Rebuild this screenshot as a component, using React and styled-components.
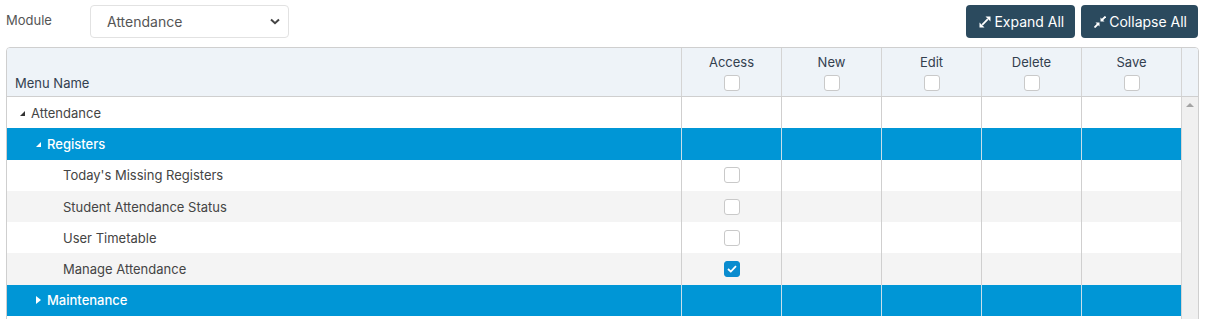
import React from "react";
import styled, { createGlobalStyle } from "styled-components";

const GlobalStyle = createGlobalStyle`
  body {
    margin: 0;
    background: #fff;
    font-family: Inter, "Liberation Sans", sans-serif;
    font-size: 13px;
    color: #444;
  }
`;

const columns = ["Access", "New", "Edit", "Delete", "Save"];

const rows = [
  { label: "Attendance", level: 0, toggle: "open" },
  { label: "Registers", level: 1, toggle: "open", group: true },
  { label: "Today's Missing Registers", level: 2, access: false },
  { label: "Student Attendance Status", level: 2, access: false },
  { label: "User Timetable", level: 2, access: false },
  { label: "Manage Attendance", level: 2, access: true },
  { label: "Maintenance", level: 1, toggle: "closed", group: true },
];

export default function App() {
  return (
    <Page>
      <GlobalStyle />
      <TopBar>
        <ModuleLabel>Module</ModuleLabel>
        <SelectBox>
          <span>Attendance</span>
          <svg width="10" height="7" viewBox="0 0 10 7">
            <path d="M1 1.5 L5 5.2 L9 1.5" fill="none" stroke="#444" strokeWidth="2" />
          </svg>
        </SelectBox>
        <Spacer />
        <ActionButton>
          <svg width="12" height="12" viewBox="0 0 12 12">
            <path d="M3.2 8.8 L8.8 3.2" stroke="#fff" strokeWidth="1.8" />
            <path d="M11.5 0.5 L11.5 5.5 L6.5 0.5 Z" fill="#fff" />
            <path d="M0.5 11.5 L0.5 6.5 L5.5 11.5 Z" fill="#fff" />
          </svg>
          Expand All
        </ActionButton>
        <ActionButton>
          <svg width="12" height="12" viewBox="0 0 12 12">
            <path d="M11.5 0.5 L8 4" stroke="#fff" strokeWidth="1.8" />
            <path d="M0.5 11.5 L4 8" stroke="#fff" strokeWidth="1.8" />
            <path d="M6.5 5.5 L6.5 1.5 L10.5 5.5 Z" fill="#fff" />
            <path d="M5.5 6.5 L5.5 10.5 L1.5 6.5 Z" fill="#fff" />
          </svg>
          Collapse All
        </ActionButton>
      </TopBar>

      <Table>
        <HeaderRow>
          <NameHead>Menu Name</NameHead>
          {columns.map((c) => (
            <PermHead key={c}>
              {c}
              <CheckBox />
            </PermHead>
          ))}
          <ScrollHead />
        </HeaderRow>
        <Body>
          <Rows>
            {rows.map((r, i) => (
              <Row key={r.label} $group={r.group} $striped={!r.group && i % 2 === 1}>
                <NameCell $level={r.level}>
                  {r.toggle === "open" && <OpenToggle $light={r.group} />}
                  {r.toggle === "closed" && <ClosedToggle />}
                  {r.label}
                </NameCell>
                {columns.map((c, j) => (
                  <PermCell key={c} $group={r.group}>
                    {j === 0 && r.access !== undefined && (
                      <CheckBox $checked={r.access}>
                        {r.access && (
                          <svg width="10" height="8" viewBox="0 0 10 8">
                            <path d="M1 4 L3.8 6.6 L9 1.2" fill="none" stroke="#fff" strokeWidth="1.8" />
                          </svg>
                        )}
                      </CheckBox>
                    )}
                  </PermCell>
                ))}
              </Row>
            ))}
          </Rows>
          <ScrollTrack>
            <ScrollArrow />
          </ScrollTrack>
        </Body>
      </Table>
    </Page>
  );
}

const Page = styled.div`
  padding: 5px 0 0 6px;
  width: 1193px;
`;

const TopBar = styled.div`
  display: flex;
  align-items: center;
  gap: 6px;
  height: 33px;
  margin-bottom: 9px;
  padding-right: 1px;
`;

const ModuleLabel = styled.span`
  width: 78px;
  font-size: 13px;
  color: #555;
  align-self: flex-start;
  margin-top: 7px;
`;

const SelectBox = styled.div`
  box-sizing: border-box;
  width: 199px;
  height: 33px;
  border: 1px solid #e2e2e2;
  border-radius: 4px;
  display: flex;
  align-items: center;
  justify-content: space-between;
  padding: 0 8px 0 16px;
  font-size: 14px;
  color: #555;
`;

const Spacer = styled.div`
  flex: 1;
`;

const ActionButton = styled.button`
  box-sizing: border-box;
  height: 33px;
  padding: 0 11px 0 13px;
  border: none;
  border-radius: 4px;
  background: #2b4a5e;
  color: #fff;
  font-family: Inter, "Liberation Sans", sans-serif;
  font-size: 14px;
  display: flex;
  align-items: center;
  gap: 3px;
`;

const Table = styled.div`
  border: 1px solid #cfcfcf;
  border-radius: 4px 4px 0 0;
  overflow: hidden;
`;

const HeaderRow = styled.div`
  display: grid;
  grid-template-columns: 1fr repeat(5, 100px) 17px;
  height: 48px;
  background: #eef3f8;
  border-bottom: 1px solid #cfcfcf;
  color: #33404f;
`;

const NameHead = styled.div`
  display: flex;
  align-items: flex-end;
  padding: 0 0 5px 8px;
  font-size: 13px;
`;

const PermHead = styled.div`
  border-left: 1px solid #d4d4d4;
  display: flex;
  flex-direction: column;
  align-items: center;
  padding-top: 6px;
  gap: 5px;
  font-size: 13px;
`;

const ScrollHead = styled.div`
  border-left: 1px solid #d4d4d4;
`;

const Body = styled.div`
  display: flex;
  height: 222px;
`;

const Rows = styled.div`
  flex: 1;
`;

const Row = styled.div`
  display: grid;
  grid-template-columns: 1fr repeat(5, 100px);
  height: 31.3px;
  background: ${(p) => (p.$group ? "#0096d6" : p.$striped ? "#f4f4f4" : "#fff")};
  color: ${(p) => (p.$group ? "#fff" : "#444")};
  font-weight: ${(p) => (p.$group ? 500 : 400)};
`;

const NameCell = styled.div`
  display: flex;
  align-items: center;
  padding-left: ${(p) => [13, 29, 56][p.$level]}px;
  gap: 6px;
  font-size: 13px;
`;

const OpenToggle = styled.span`
  width: 0;
  height: 0;
  border-left: 5px solid transparent;
  border-bottom: 5px solid ${(p) => (p.$light ? "#fff" : "#333")};
  margin-top: 2px;
`;

const ClosedToggle = styled.span`
  width: 0;
  height: 0;
  border-top: 4px solid transparent;
  border-bottom: 4px solid transparent;
  border-left: 5px solid #fff;
`;

const PermCell = styled.div`
  border-left: 1px solid ${(p) => (p.$group ? "#c8dfea" : "#cfcfcf")};
  display: flex;
  align-items: center;
  justify-content: center;
`;

const CheckBox = styled.span`
  box-sizing: border-box;
  width: 16px;
  height: 16px;
  border-radius: 3px;
  border: 1px solid ${(p) => (p.$checked ? "#0a8ccf" : "#c9c9c9")};
  background: ${(p) => (p.$checked ? "#0a8ccf" : "#fff")};
  display: flex;
  align-items: center;
  justify-content: center;
`;

const ScrollTrack = styled.div`
  width: 17px;
  background: #f0f0f0;
  border-left: 1px solid #d4d4d4;
  display: flex;
  justify-content: center;
  padding-top: 6px;
  box-sizing: border-box;
`;

const ScrollArrow = styled.span`
  width: 0;
  height: 0;
  border-left: 4px solid transparent;
  border-right: 4px solid transparent;
  border-bottom: 4px solid #a3a3a3;
`;
